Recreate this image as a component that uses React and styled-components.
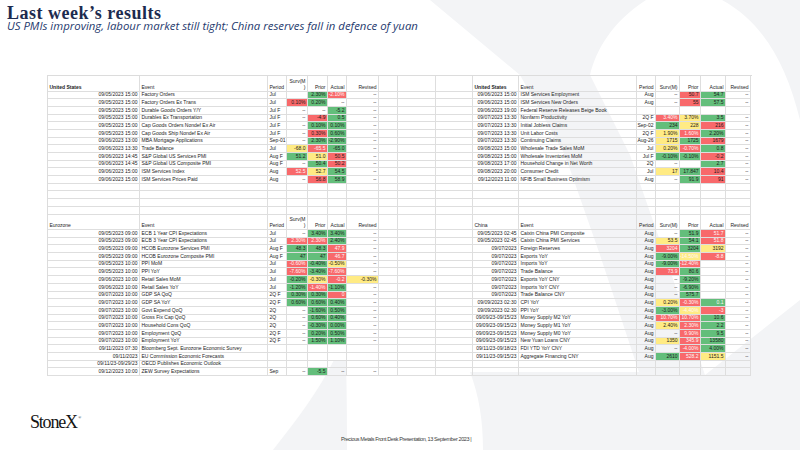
import React from "react";
import styled, { createGlobalStyle } from "styled-components";

const GlobalStyle = createGlobalStyle`
  html, body { margin: 0; padding: 0; background: #fff; }
  body { width: 800px; height: 450px; overflow: hidden; }
`;

const COLS =
  "92px 128px 19px 21px 20px 19px 32px 19px 38px 37px 46px 118px 19px 24px 21px 25px 25px";

const TONES = { g: "#63be7b", r: "#f8696b", y: "#ffeb84" };

const Page = styled.div`
  position: relative;
  width: 800px;
  height: 450px;
  overflow: hidden;
  background: #fff;
  display: flex;
  flex-direction: column;
  font-family: "Liberation Sans", Arial, sans-serif;
`;

const Watermark = styled.svg`
  position: absolute;
  left: 0;
  top: 0;
  z-index: 0;
`;

const Header = styled.header`
  position: relative;
  z-index: 1;
  height: 75px;
  box-sizing: border-box;
  padding: 6px 0 0 7px;
`;

const Title = styled.h1`
  margin: 0;
  font-family: "Liberation Serif", "Times New Roman", serif;
  font-weight: 700;
  font-size: 18px;
  line-height: 15px;
  letter-spacing: 0.5px;
  color: #1d2b4f;
`;

const Subtitle = styled.p`
  margin: 0;
  font-family: "Open Sans", sans-serif;
  font-style: italic;
  font-size: 11.4px;
  line-height: 10px;
  color: #1f3a6e;
`;

const Sheet = styled.div`
  position: relative;
  z-index: 1;
  margin-left: 47px;
  width: 704px;
  border-top: 1px solid #dcdcdc;
  border-left: 1px solid #dcdcdc;
`;

const Row = styled.div`
  display: grid;
  grid-template-columns: ${COLS};
  height: ${(p) => (p.$head ? "15.5px" : "7.7px")};
`;

const Cell = styled.div`
  box-sizing: border-box;
  min-width: 0;
  border-right: 1px solid #dedede;
  border-bottom: 1px solid #dedede;
  background: ${(p) => (p.$tone ? TONES[p.$tone] : "transparent")};
  color: ${(p) => (p.$light ? "#fff6f6" : "#1c1c1c")};
  font-size: 5px;
  line-height: 5.6px;
  font-weight: ${(p) => (p.$bold ? 700 : 400)};
  padding: 0 1.5px 0.4px;
  display: flex;
  flex-direction: column;
  justify-content: flex-end;
  align-items: ${(p) => (p.$right ? "flex-end" : "flex-start")};
  text-align: ${(p) => (p.$right ? "right" : "left")};
  white-space: nowrap;
`;

const Footer = styled.footer`
  position: relative;
  z-index: 1;
  flex: 1;
  display: grid;
  grid-template-columns: 311px auto;
  padding-left: 30px;
`;

const Logo = styled.div`
  align-self: start;
  margin-top: 33px;
  font-family: "Liberation Serif", "Times New Roman", serif;
  font-size: 18px;
  line-height: 18px;
  letter-spacing: -1.2px;
  color: #141414;
`;

const Reg = styled.sup`
  font-size: 4px;
  letter-spacing: 0;
  margin-left: 1.5px;
  vertical-align: 9px;
`;

const Note = styled.div`
  align-self: start;
  margin-top: 60px;
  font-family: "Liberation Sans", Arial, sans-serif;
  font-size: 5.5px;
  line-height: 6px;
  letter-spacing: -0.4px;
  color: #3a3a3a;
  white-space: nowrap;
`;

const parse = (v) => {
  if (!v) return { text: "", tone: null, light: false };
  const [text, flag = ""] = v.split("|");
  return { text, tone: flag[0] || null, light: flag.includes("w") };
};

const US_L = [
  ["09/05/2023 15:00", "Factory Orders", "Jul", "", "2.30%|g", "-2.10%|rw", "--"],
  ["09/05/2023 15:00", "Factory Orders Ex Trans", "Jul", "0.10%|r", "0.20%|g", "--", "--"],
  ["09/05/2023 15:00", "Durable Goods Orders Y/Y", "Jul F", "--", "--", "-5.2|g", "--"],
  ["09/05/2023 15:00", "Durables Ex Transportation", "Jul F", "--", "-4.9|r", "0.5|g", "--"],
  ["09/05/2023 15:00", "Cap Goods Orders Nondef Ex Air", "Jul F", "--", "0.10%|g", "0.10%|g", "--"],
  ["09/05/2023 15:00", "Cap Goods Ship Nondef Ex Air", "Jul F", "--", "0.30%|r", "0.60%|g", "--"],
  ["09/06/2023 13:00", "MBA Mortgage Applications", "Sep-01", "--", "2.30%|g", "-2.90%|g", "--"],
  ["09/06/2023 13:30", "Trade Balance", "Jul", "-68.0|y", "-65.5|rw", "-65.0|g", "--"],
  ["09/06/2023 14:45", "S&P Global US Services PMI", "Aug F", "51.2|g", "51.0|y", "50.5|r", "--"],
  ["09/06/2023 14:45", "S&P Global US Composite PMI", "Aug F", "--", "50.4|g", "50.2|r", "--"],
  ["09/06/2023 15:00", "ISM Services Index", "Aug", "52.5|rw", "52.7|y", "54.5|g", "--"],
  ["09/06/2023 15:00", "ISM Services Prices Paid", "Aug", "--", "56.8|r", "58.9|g", "--"],
];

const US_R = [
  ["09/06/2023 15:00", "ISM Services Employment", "Aug", "--", "50.7|r", "54.7|g", "--"],
  ["09/06/2023 15:00", "ISM Services New Orders", "Aug", "--", "55|r", "57.5|g", "--"],
  ["09/06/2023 19:00", "Federal Reserve Releases Beige Book", "", "", "", "", ""],
  ["09/07/2023 13:30", "Nonfarm Productivity", "2Q F", "3.40%|rw", "3.70%|y", "3.5|g", "--"],
  ["09/07/2023 13:30", "Initial Jobless Claims", "Sep-02", "234|g", "228|y", "216|r", "--"],
  ["09/07/2023 13:30", "Unit Labor Costs", "2Q F", "1.90%|y", "1.60%|rw", "2.20%|g", "--"],
  ["09/07/2023 13:30", "Continuing Claims", "Aug-26", "1715|y", "1725|g", "1679|r", "--"],
  ["09/08/2023 15:00", "Wholesale Trade Sales MoM", "Jul", "0.20%|y", "-0.70%|rw", "0.8|g", "--"],
  ["09/08/2023 15:00", "Wholesale Inventories MoM", "Jul F", "-0.10%|g", "-0.10%|g", "-0.2|r", "--"],
  ["09/08/2023 17:00", "Household Change in Net Worth", "2Q", "--", "", "2.7|g", "--"],
  ["09/08/2023 20:00", "Consumer Credit", "Jul", "17|y", "17.847|g", "10.4|r", "--"],
  ["09/12/2023 11:00", "NFIB Small Business Optimism", "Aug", "--", "91.9|g", "91|r", "--"],
];

const EZ = [
  ["09/05/2023 09:00", "ECB 1 Year CPI Expectations", "Jul", "--", "3.40%|g", "3.40%|g", "--"],
  ["09/05/2023 09:00", "ECB 3 Year CPI Expectations", "Jul", "2.30%|rw", "2.30%|rw", "2.40%|g", "--"],
  ["09/05/2023 09:00", "HCOB Eurozone Services PMI", "Aug F", "48.3|g", "48.3|g", "47.9|rw", "--"],
  ["09/05/2023 09:00", "HCOB Eurozone Composite PMI", "Aug F", "47|g", "47|g", "46.7|rw", "--"],
  ["09/05/2023 10:00", "PPI MoM", "Jul", "-0.60%|rw", "-0.40%|g", "-0.50%|y", "--"],
  ["09/05/2023 10:00", "PPI YoY", "Jul", "-7.60%|rw", "-3.40%|g", "-7.60%|rw", "--"],
  ["09/06/2023 10:00", "Retail Sales MoM", "Jul", "-0.20%|g", "-0.30%|y", "-0.2|rw", "-0.30%|y"],
  ["09/06/2023 10:00", "Retail Sales YoY", "Jul", "-1.20%|g", "-1.40%|rw", "-1.10%|g", "--"],
  ["09/07/2023 10:00", "GDP SA QoQ", "2Q F", "0.30%|g", "0.30%|g", "0|rw", "--"],
  ["09/07/2023 10:00", "GDP SA YoY", "2Q F", "0.60%|g", "0.60%|g", "0.40%|g", "--"],
  ["09/07/2023 10:00", "Govt Expend QoQ", "2Q", "--", "-1.60%|g", "0.50%|g", "--"],
  ["09/07/2023 10:00", "Gross Fix Cap QoQ", "2Q", "--", "0.60%|g", "0.40%|g", "--"],
  ["09/07/2023 10:00", "Household Cons QoQ", "2Q", "--", "-0.30%|g", "0.00%|g", "--"],
  ["09/07/2023 10:00", "Employment QoQ", "2Q F", "--", "0.20%|g", "0.50%|g", "--"],
  ["09/07/2023 10:00", "Employment YoY", "2Q F", "--", "1.50%|g", "1.10%|g", "--"],
  ["09/11/2023 07:30", "Bloomberg Sept. Eurozone Economic Survey", "", "", "", "", ""],
  ["09/11/2023", "EU Commission Economic Forecasts", "", "", "", "", ""],
  ["09/11/23-09/29/23", "OECD Publishes Economic Outlook", "", "", "", "", ""],
  ["09/12/2023 10:00", "ZEW Survey Expectations", "Sep", "--", "-5.5|g", "--", "--"],
];

const CN = [
  ["09/05/2023 02:45", "Caixin China PMI Composite", "Aug", "--", "51.9|g", "51.7|rw", "--"],
  ["09/05/2023 02:45", "Caixin China PMI Services", "Aug", "53.5|y", "54.1|g", "51.8|rw", "--"],
  ["09/07/2023", "Foreign Reserves", "Aug", "3204|rw", "3204|g", "3192|y", "--"],
  ["09/07/2023", "Exports YoY", "Aug", "-9.00%|g", "-14.50%|yw", "-8.8|rw", "--"],
  ["09/07/2023", "Imports YoY", "Aug", "-9.00%|g", "-12.40%|rw", "", "--"],
  ["09/07/2023", "Trade Balance", "Aug", "73.9|rw", "80.6|g", "", "--"],
  ["09/07/2023", "Exports YoY CNY", "Aug", "--", "-9.20%|g", "", "--"],
  ["09/07/2023", "Imports YoY CNY", "Aug", "--", "-6.90%|g", "", "--"],
  ["09/07/2023", "Trade Balance CNY", "Aug", "--", "575.7|g", "", "--"],
  ["09/09/2023 02:30", "CPI YoY", "Aug", "0.20%|y", "-0.30%|rw", "0.1|gw", "--"],
  ["09/09/2023 02:30", "PPI YoY", "Aug", "-3.00%|g", "-4.40%|yw", "-3|rw", "--"],
  ["09/09/23-09/15/23", "Money Supply M2 YoY", "Aug", "10.70%|rw", "10.70%|rw", "10.6|g", "--"],
  ["09/09/23-09/15/23", "Money Supply M1 YoY", "Aug", "2.40%|y", "2.30%|rw", "2.2|g", "--"],
  ["09/09/23-09/15/23", "Money Supply M0 YoY", "Aug", "--", "9.90%|rw", "9.5|g", "--"],
  ["09/09/23-09/15/23", "New Yuan Loans CNY", "Aug", "1350|y", "345.9|rw", "13580|g", "--"],
  ["09/11/23-09/18/23", "FDI YTD YoY CNY", "Aug", "--", "-4.00%|rw", "4.00%|g", "--"],
  ["09/11/23-09/15/23", "Aggregate Financing CNY", "Aug", "2610|g", "528.2|rw", "1151.5|y", "--"],
];

const EMPTY = ["", "", "", "", "", "", ""];

function SideCells({ row, side }) {
  return row.map((v, i) => {
    const c = parse(v);
    const right = i === 0 || i >= 3 || (i === 2 && side === "R");
    return (
      <Cell key={side + i} $right={right} $tone={c.tone} $light={c.light}>
        {c.text}
      </Cell>
    );
  });
}

function Spacers() {
  return [0, 1, 2].map((i) => <Cell key={"s" + i} />);
}

function DataRow({ left, right }) {
  return (
    <Row>
      <SideCells row={left || EMPTY} side="L" />
      <Spacers />
      <SideCells row={right || EMPTY} side="R" />
    </Row>
  );
}

function HeadCells({ label, bold, side }) {
  const isR = side === "R";
  return (
    <>
      <Cell $bold={bold}>{label}</Cell>
      <Cell>Event</Cell>
      <Cell $right={isR}>Period</Cell>
      <Cell $right>
        {isR ? (
          "Surv(M)"
        ) : (
          <>
            <span>Surv(M</span>
            <span>)</span>
          </>
        )}
      </Cell>
      <Cell $right>Prior</Cell>
      <Cell $right>Actual</Cell>
      <Cell $right>Revised</Cell>
    </>
  );
}

function HeadRow({ left, right, bold }) {
  return (
    <Row $head>
      <HeadCells label={left} bold={bold} side="L" />
      <Spacers />
      <HeadCells label={right} bold={bold} side="R" />
    </Row>
  );
}

function Backdrop() {
  return (
    <Watermark width="800" height="450" viewBox="0 0 800 450">
      <g fill="#f3f4f6">
        <path d="M430 0 H646 C 612 22 596 50 590 75 L 630 155 L 665 255 L 705 375 L 640 375 L 600 255 L 565 155 L 520 75 Z" />
        <path d="M722 0 H800 V120 C 786 62 762 22 722 0 Z" />
        <path d="M273 450 C 298 418 318 392 334 360 L 346 360 C 347 400 347 430 347 450 Z" />
        <path d="M483 450 C 483 420 479 396 470 372 L 640 372 L 705 375 L 800 300 V450 Z" />
      </g>
    </Watermark>
  );
}

export default function App() {
  const blanks = [0, 1, 2, 3];
  return (
    <>
      <GlobalStyle />
      <Page>
        <Backdrop />
        <Header>
          <Title>Last week’s results</Title>
          <Subtitle>
            US PMIs improving, labour market still tight; China reserves fall in defence of yuan
          </Subtitle>
        </Header>
        <Sheet>
          <HeadRow left="United States" right="United States" bold />
          {US_L.map((r, i) => (
            <DataRow key={"us" + i} left={r} right={US_R[i]} />
          ))}
          {blanks.map((b) => (
            <DataRow key={"b" + b} />
          ))}
          <HeadRow left="Eurozone" right="China" />
          {EZ.map((r, i) => (
            <DataRow key={"ez" + i} left={r} right={CN[i]} />
          ))}
        </Sheet>
        <Footer>
          <Logo>
            StoneX<Reg>®</Reg>
          </Logo>
          <Note>Precious Metals Front Desk Presentation, 13 September 2023 |</Note>
        </Footer>
      </Page>
    </>
  );
}
